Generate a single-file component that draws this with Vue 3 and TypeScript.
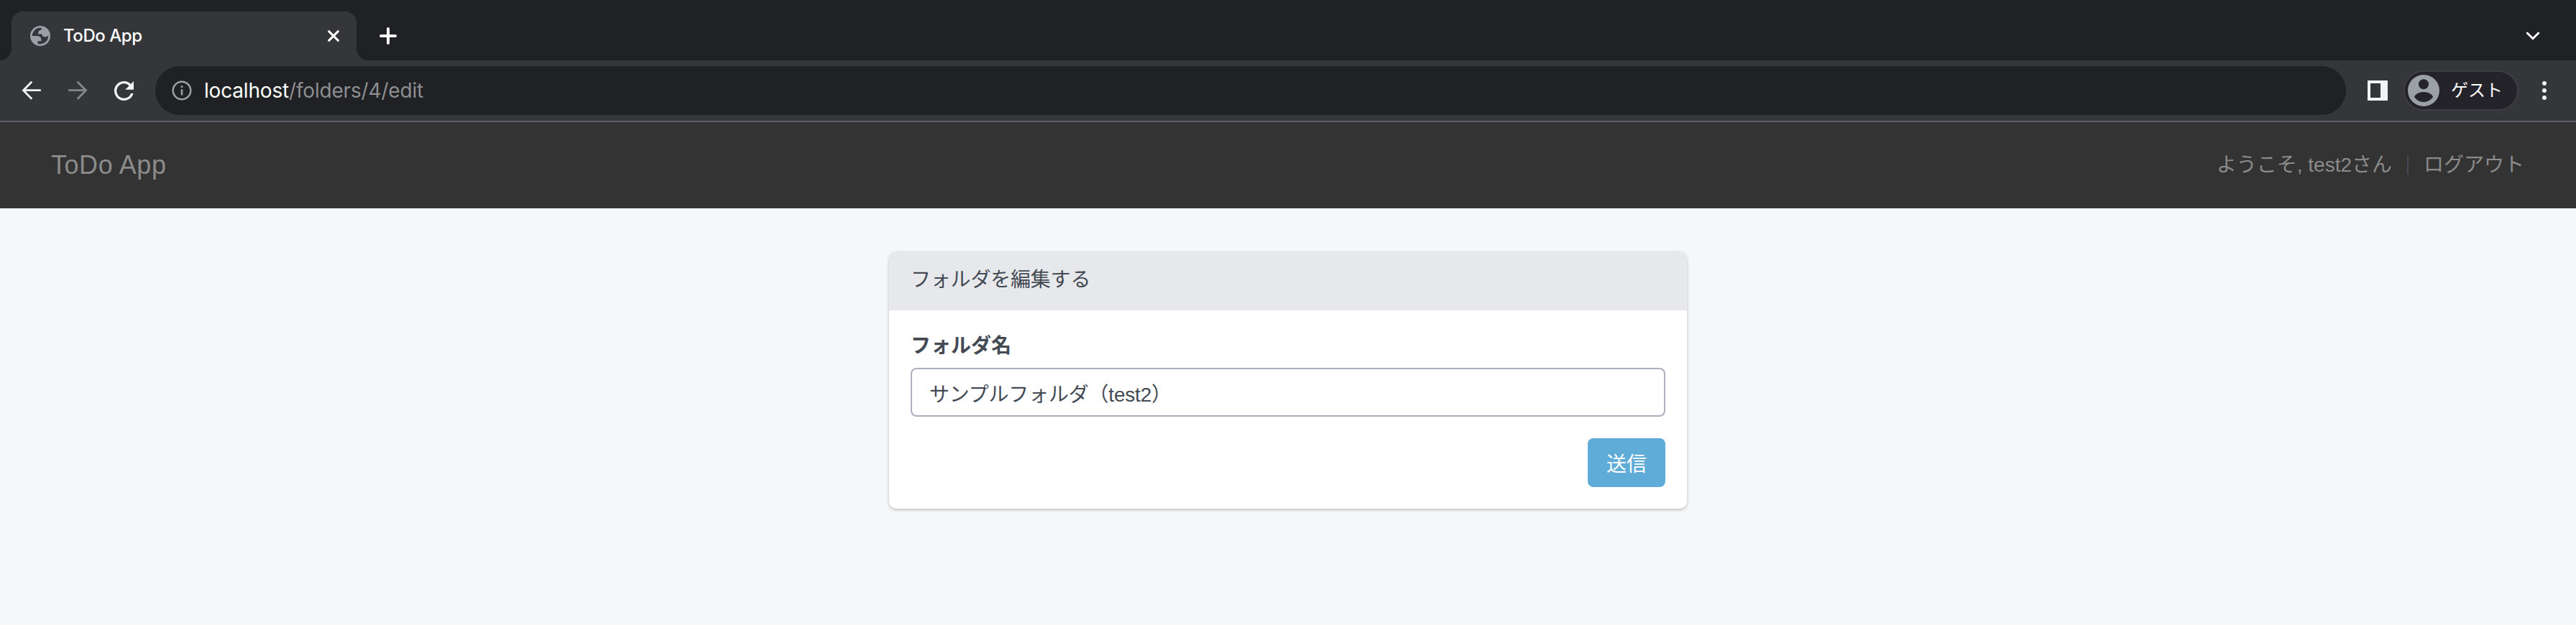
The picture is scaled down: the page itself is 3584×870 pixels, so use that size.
<script setup lang="ts">
import { ref } from 'vue'

const appName = 'ToDo App'
const host = 'localhost'
const path = '/folders/4/edit'
const userName = 'test2'
const folderName = ref<string>('サンプルフォルダ（test2）')
</script>

<template>
  <div class="window">
    <div class="tabstrip">
      <div class="tab">
        <svg class="globe" viewBox="2 2 20 20" width="28" height="28">
          <circle cx="12" cy="12" r="10" fill="#9aa0a6" />
          <path
            fill="#35363a"
            d="M4 12h4.4c3.407.022 4.922 1.73 4.543 5.127H9.488v2.47a8.004 8.004 0 0 0 10.498-8.083C19.327 12.504 18.332 13 17 13c-2.137 0-3.206-.916-3.206-2.75h-3.748c-.274-2.728.683-4.092 2.87-4.092 0-.975.327-1.597.811-1.97A8.004 8.004 0 0 0 4 12z"
          />
        </svg>
        <span class="tab-title">{{ appName }}</span>
        <svg class="close" viewBox="0 0 18 18" width="18" height="18">
          <path d="M2.600 2.600l12.800 12.800M15.400 2.600L2.600 15.400" stroke="#fff" stroke-width="2.900" stroke-linecap="round" />
        </svg>
      </div>
      <svg class="plus" viewBox="0 0 24 24" width="24" height="24">
        <path d="M12 2v20M2 12h20" stroke="#fff" stroke-width="4" stroke-linecap="round" />
      </svg>
      <svg class="chevron" viewBox="0 0 20 14" width="20" height="14">
        <path d="M2.200 3l7.800 7.800L17.800 3" fill="none" stroke="#fff" stroke-width="2.900" stroke-linecap="round" />
      </svg>
    </div>

    <div class="toolbar">
      <svg viewBox="0 0 28 28" width="28" height="28">
        <path
          d="M25.700 13.700H3M13.500 2.500L2.500 13.700l11 11.200"
          fill="none"
          stroke="#f1f3f4"
          stroke-width="2.800"
          stroke-linecap="round"
        />
      </svg>
      <svg class="forward" viewBox="0 0 28 28" width="28" height="28">
        <path
          d="M2.300 13.700H25M14.500 2.500l11 11.200-11 11.200"
          fill="none"
          stroke="#868789"
          stroke-width="2.800"
          stroke-linecap="round"
        />
      </svg>
      <svg class="reload" viewBox="4 4 16 16" width="27" height="27">
        <path
          fill="#f1f3f4"
          d="M17.650 6.350A7.958 7.958 0 0 0 12 4a8 8 0 1 0 7.730 10h-2.080A5.990 5.990 0 0 1 12 18a6 6 0 1 1 4.220-10.220L13 11h7V4z"
        />
      </svg>
      <div class="omnibox">
        <svg viewBox="0 0 28 28" width="28" height="28">
          <circle cx="14" cy="14" r="12.300" fill="none" stroke="#9aa0a6" stroke-width="2.500" />
          <path d="M12.700 12.300h2.600v8.200h-2.600zM12.700 7.300h2.600v2.800h-2.600z" fill="#9aa0a6" />
        </svg>
        <span class="url"><span class="host">{{ host }}</span>{{ path }}</span>
      </div>
      <svg class="panel" viewBox="0 0 28 28" width="28" height="28">
        <path fill="#f1f3f4" fill-rule="evenodd" d="M0 0h28v28H0zM4 4v20h14V4z" />
      </svg>
      <div class="profile">
        <svg viewBox="0 0 44 44" width="44" height="44">
          <circle cx="22" cy="22" r="22" fill="#9aa0a6" />
          <circle cx="22" cy="13.300" r="7" fill="#242329" />
          <path d="M9 31c1-4 7-7 13-7s12 3 13 7c-3 4-7 7-13 7S12 35 9 31z" fill="#242329" />
        </svg>
        <span class="guest">ゲスト</span>
      </div>
      <svg class="menu" viewBox="0 0 6 26" width="6" height="26">
        <circle v-for="y in [3, 13, 23]" :key="y" cx="3" :cy="y" r="3" fill="#f1f3f4" />
      </svg>
    </div>

    <header class="navbar">
      <a class="brand">{{ appName }}</a>
      <div class="account">
        <span class="welcome">ようこそ, {{ userName }}さん</span>
        <span class="divider"></span>
        <a>ログアウト</a>
      </div>
    </header>

    <main class="content">
      <section class="card">
        <h1 class="card-heading">フォルダを編集する</h1>
        <form class="card-body" @submit.prevent>
          <label class="label" for="title">フォルダ名</label>
          <input id="title" v-model="folderName" class="field" type="text" />
          <button class="submit" type="submit">送信</button>
        </form>
      </section>
    </main>
  </div>
</template>

<style>
body {
  margin: 0;
  background: #f5f7f9;
}
</style>

<style scoped>
.window,
.window * {
  box-sizing: border-box;
}
.window {
  width: 100%;
  height: 870px;
  overflow: hidden;
  background: #f5f7f9;
  font-family: "Liberation Sans", "Noto Sans CJK JP", sans-serif;
  font-size: 28px;
}
svg {
  display: block;
  flex: none;
}
.tabstrip {
  display: flex;
  align-items: center;
  height: 84px;
  padding: 16px 50px 0 16px;
  background: #202124;
}
.tab {
  position: relative;
  display: flex;
  align-items: center;
  width: 480px;
  height: 68px;
  padding: 0 23px 0 26px;
  border-radius: 16px 16px 0 0;
  background: #35363a;
}
.tab::before,
.tab::after {
  content: "";
  position: absolute;
  bottom: 0;
  width: 16px;
  height: 16px;
}
.tab::before {
  left: -16px;
  background: radial-gradient(circle at 0 0, transparent 15.5px, #35363a 16px);
}
.tab::after {
  right: -16px;
  background: radial-gradient(circle at 100% 0, transparent 15.5px, #35363a 16px);
}
.tab-title {
  margin-left: 18px;
  color: #fff;
  font-family: Inter, sans-serif;
  font-size: 24px;
  font-weight: 500;
  line-height: 28px;
  letter-spacing: -0.45px;
  white-space: nowrap;
}
.close {
  margin-left: auto;
}
.plus {
  margin-left: 32px;
}
.chevron {
  margin-left: auto;
}
.toolbar {
  display: flex;
  align-items: center;
  height: 86px;
  padding: 0 41px 0 30px;
  border-bottom: 2px solid #5f6368;
  background: #35363a;
}
.forward {
  margin-left: 36px;
}
.reload {
  margin-left: 37px;
}
.omnibox {
  display: flex;
  align-items: center;
  flex: 1;
  height: 68px;
  margin-left: 30px;
  padding-left: 23px;
  border-radius: 34px;
  background: #202124;
}
.url {
  margin-left: 17px;
  color: #8d8e90;
  font-family: Inter, sans-serif;
  font-size: 28px;
  line-height: 36px;
  letter-spacing: -0.18px;
}
.host {
  color: #fff;
}
.panel {
  margin-left: 30px;
}
.profile {
  display: flex;
  align-items: center;
  width: 160px;
  height: 56px;
  margin-left: 22px;
  padding-left: 4px;
  border: 2px solid #3d3d43;
  border-radius: 28px;
  background: #242329;
}
.guest {
  margin-left: 16px;
  color: #fff;
  font-size: 24px;
  line-height: 36px;
}
.menu {
  margin-left: 33px;
}
.navbar {
  display: flex;
  align-items: center;
  justify-content: space-between;
  height: 120px;
  padding: 0 72px 0 71px;
  background: #333;
  color: #8b8b8b;
}
.brand {
  font-size: 36px;
  line-height: 40px;
  letter-spacing: 0.55px;
}
.account {
  display: flex;
  align-items: center;
  line-height: 40px;
}
.divider {
  width: 2px;
  height: 26px;
  margin: 0 21px 0 21px;
  background: #434a54;
}
.content {
  display: flex;
  justify-content: center;
  padding-top: 60px;
}
.card {
  width: 1110px;
  height: 358px;
  border-radius: 10px;
  background: #fff;
  box-shadow: 0 2px 4px rgba(0, 0, 0, 0.22);
  color: #434a54;
}
.card-heading {
  height: 82px;
  margin: 0;
  padding: 20px 30px;
  border-radius: 10px 10px 0 0;
  background: #e7e8ec;
  font-size: 28px;
  font-weight: 400;
  line-height: 40px;
  letter-spacing: -0.2px;
}
.card-body {
  display: flex;
  flex-direction: column;
  padding: 30px;
}
.label {
  height: 50px;
  font-weight: 700;
  line-height: 40px;
}
.field {
  width: 100%;
  height: 68px;
  padding: 2px 24px 0;
  border: 2px solid #aab0be;
  border-radius: 8px;
  outline: none;
  background: #fff;
  color: #434a54;
  font: inherit;
  letter-spacing: -0.2px;
}
.submit {
  align-self: flex-end;
  width: 108px;
  height: 68px;
  margin-top: 30px;
  padding: 0;
  border: 0;
  border-radius: 8px;
  background: #5eacd7;
  color: #fff;
  font: inherit;
}
</style>
